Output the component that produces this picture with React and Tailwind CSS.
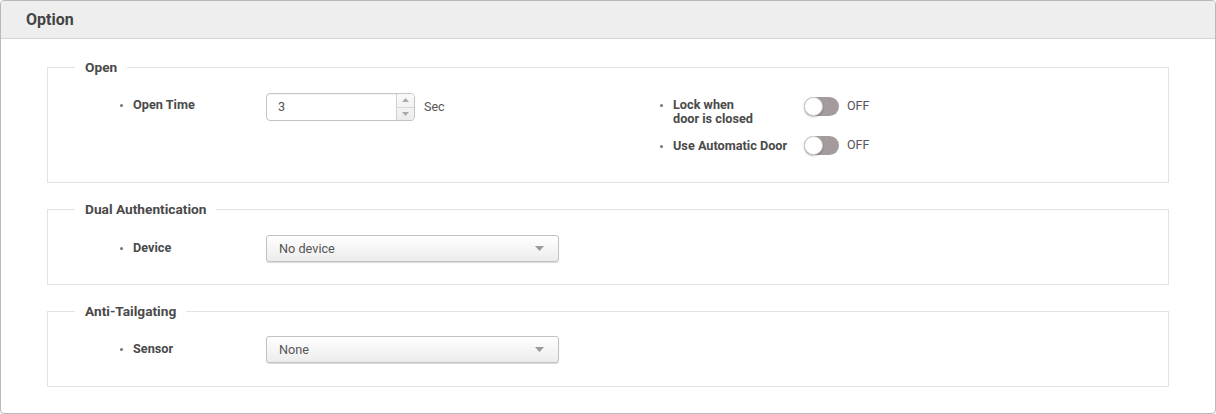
import React, { useState } from "react";

const Bullet = () => (
  <span className="mr-[10px] inline-block h-[3px] w-[3px] shrink-0 translate-y-[-2px] rounded-full bg-[#777]" />
);

const Toggle = ({ on, onChange }) => (
  <div className="flex items-center gap-[8px]">
    <button
      onClick={onChange}
      className={`relative flex h-[19px] w-[35px] items-center rounded-full ${on ? "bg-[#6aa84f]" : "bg-[#a39b9c]"}`}
    >
      <span
        className={`h-[19px] w-[19px] rounded-full border border-[#d6d6d6] bg-white shadow-[0_1px_2px_rgba(0,0,0,0.3)] ${on ? "ml-[16px]" : "ml-0"}`}
      />
    </button>
    <span className="text-[12.5px] text-[#555]">{on ? "ON" : "OFF"}</span>
  </div>
);

const Select = ({ value }) => (
  <div className="flex h-[27px] w-[293px] items-center justify-between rounded-[3px] border border-[#c2c2c2] bg-gradient-to-b from-white to-[#ececec] pl-[12px] pr-[14px] shadow-[0_1px_1px_rgba(0,0,0,0.15)]">
    <span className="text-[12.7px] text-[#555]">{value}</span>
    <svg width="9" height="5" viewBox="0 0 9 5">
      <path d="M0 0h9L4.5 5z" fill="#999" />
    </svg>
  </div>
);

const Section = ({ title, children }) => (
  <fieldset className="m-0 border border-[#e3e3e3] p-0">
    <legend className="ml-[27px] px-[10px] text-[13.7px] leading-[16px] font-bold text-[#4a4a4a]">
      {title}
    </legend>
    {children}
  </fieldset>
);

const Label = ({ children, className = "" }) => (
  <div className={`flex items-baseline text-[12.7px] leading-[14px] font-bold text-[#4a4a4a] ${className}`}>
    <Bullet />
    <span>{children}</span>
  </div>
);

export default function App() {
  const [openTime, setOpenTime] = useState(3);
  const [lockClosed, setLockClosed] = useState(false);
  const [autoDoor, setAutoDoor] = useState(false);

  return (
    <div className="h-[414px] w-[1216px] bg-white font-['Roboto',sans-serif]">
      <div className="flex h-full flex-col overflow-hidden rounded-[4px] border border-[#b9b9b9]">
        <div className="flex h-[38px] shrink-0 items-center border-b border-[#d4d4d4] bg-[#eeeeee] pl-[25px]">
          <h2 className="text-[16px] font-bold text-[#444]">Option</h2>
        </div>

        <div className="flex flex-col gap-[18px] px-[46px] pt-[20px]">
          <Section title="Open">
            <div className="flex pt-[18px] pb-[27px] pl-[72px]">
              <div className="flex w-[540px] items-start">
                <Label className="w-[146px] pt-[5px]">Open Time</Label>
                <div className="flex items-center gap-[9px]">
                  <div className="flex h-[28px] w-[149px] overflow-hidden rounded-[4px] border border-[#c4c4c4] bg-white shadow-[inset_0_1px_1px_rgba(0,0,0,0.05)]">
                    <input
                      value={openTime}
                      onChange={(e) => setOpenTime(e.target.value)}
                      className="w-0 flex-1 pl-[11px] text-[12.7px] text-[#555] outline-none"
                    />
                    <div className="flex w-[18px] flex-col border-l border-[#d0d0d0] bg-gradient-to-b from-[#fafafa] to-[#ececec]">
                      <button className="flex flex-1 items-center justify-center border-b border-[#d8d8d8]">
                        <svg width="7" height="4" viewBox="0 0 7 4">
                          <path d="M3.5 0L7 4H0z" fill="#aaa" />
                        </svg>
                      </button>
                      <button className="flex flex-1 items-center justify-center">
                        <svg width="7" height="4" viewBox="0 0 7 4">
                          <path d="M0 0h7L3.5 4z" fill="#aaa" />
                        </svg>
                      </button>
                    </div>
                  </div>
                  <span className="text-[12.5px] text-[#555]">Sec</span>
                </div>
              </div>

              <div className="flex flex-col gap-[10px] pt-[4px]">
                <div className="flex items-start">
                  <Label className="w-[144px] pt-[1px]">
                    Lock when
                    <br />
                    door is closed
                  </Label>
                  <Toggle on={lockClosed} onChange={() => setLockClosed(!lockClosed)} />
                </div>
                <div className="flex items-center">
                  <Label className="w-[144px]">Use Automatic Door</Label>
                  <Toggle on={autoDoor} onChange={() => setAutoDoor(!autoDoor)} />
                </div>
              </div>
            </div>
          </Section>

          <Section title="Dual Authentication">
            <div className="flex items-start pt-[18px] pb-[22px] pl-[72px]">
              <Label className="w-[146px] pt-[6px]">Device</Label>
              <Select value="No device" />
            </div>
          </Section>

          <Section title="Anti-Tailgating">
            <div className="flex items-start pt-[17px] pb-[23px] pl-[72px]">
              <Label className="w-[146px] pt-[6px]">Sensor</Label>
              <Select value="None" />
            </div>
          </Section>
        </div>
      </div>
    </div>
  );
}
